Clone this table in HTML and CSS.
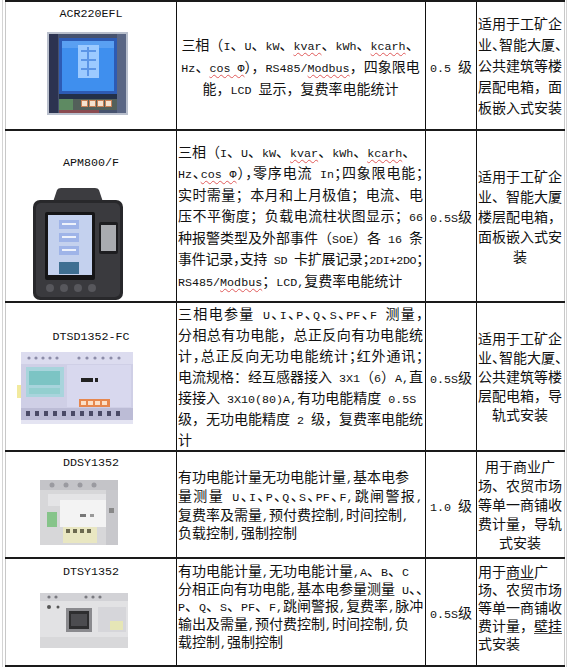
FILE: index.html
```html
<!DOCTYPE html>
<html lang="zh-CN">
<head>
<meta charset="utf-8">
<title>电能表选型表</title>
<link rel="stylesheet" href="styles.css">
</head>
<body>
<div class="frame">
<table class="spec">
<colgroup><col class="c1"><col class="c2"><col class="c3"><col class="c4"></colgroup>
<tbody>
<tr class="r1">
<td class="model">
<div class="name">ACR220EFL</div>
<svg class="dev m1" width="81" height="83" viewBox="0 0 81 83" aria-hidden="true">
<rect width="81" height="83" fill="#b9bfcc"/>
<rect x="2" y="2" width="77" height="79" fill="#46526e"/>
<rect x="2" y="2" width="9" height="79" fill="#2c3350"/>
<rect x="70" y="2" width="9" height="79" fill="#5a6684"/>
<rect x="12" y="6" width="58" height="56" fill="#2d5bb4"/>
<rect x="15" y="9" width="52" height="50" fill="#3f8fee"/>
<rect x="15" y="9" width="52" height="7" fill="#5aa0f2"/>
<rect x="31" y="13" width="21" height="33" fill="#9ccaff"/>
<g fill="#5b95e6"><rect x="34" y="18" width="15" height="2"/><rect x="34" y="27" width="15" height="2"/><rect x="34" y="36" width="15" height="2"/><rect x="40" y="15" width="2" height="29"/></g>
<rect x="12" y="62" width="58" height="5" fill="#233049"/>
<rect x="12" y="67" width="58" height="11" fill="#53605a"/>
<rect x="12" y="67" width="14" height="11" fill="#5e8a62"/>
<g fill="#f6e2cf" stroke="#c88056" stroke-width="1"><rect x="34.5" y="68.5" width="6" height="6"/><rect x="42.5" y="68.5" width="6" height="6"/><rect x="50.5" y="68.5" width="6" height="6"/><rect x="58.5" y="68.5" width="6" height="6"/></g>
<rect x="12" y="78" width="40" height="3" fill="#8a4a50"/>
</svg>
</td>
<td class="desc mid center lh22">
<span class="ln">三相（<span class="en">I</span>、<span class="en">U</span>、<span class="en">kW</span>、<span class="en sp">kvar</span>、<span class="en">kWh</span>、<span class="en sp">kcarh</span>、</span>
<span class="ln"><span class="en">Hz</span>、<span class="en sp">cos Φ</span>），<span class="en">RS485/<span class="sp">Modbus</span></span>，四象限电</span>
<span class="ln">能，<span class="en">LCD </span>显示，复费率电能统计</span>
</td>
<td class="grade"><span class="en">0.5 </span>级</td>
<td class="use mid lh21">
<span class="ln j">适用于工矿企</span>
<span class="ln j">业<span class="h">、</span>智能大厦<span class="h">、</span></span>
<span class="ln j">公共建筑等楼</span>
<span class="ln j">层配电箱，面</span>
<span class="ln j">板嵌入式安装</span>
</td>
</tr>

<tr class="r2">
<td class="model">
<div class="name">APM800/F</div>
<svg class="dev m2" width="90" height="112" viewBox="0 0 90 112" aria-hidden="true">
<path d="M24 2 Q25 0 28 0 H62 Q65 0 66 2 L70 14 H20 Z" fill="#3c3c40"/>
<rect x="0" y="12" width="90" height="100" rx="7" fill="#28282b"/>
<rect x="3" y="15" width="84" height="94" rx="5" fill="#3a3a3e"/>
<rect x="12" y="24" width="50" height="68" rx="2" fill="#151517"/>
<rect x="15" y="27" width="44" height="60" fill="#c4d1ee"/>
<g fill="#9fb4e8"><rect x="26" y="32" width="20" height="9"/><rect x="26" y="45" width="20" height="9"/><rect x="26" y="58" width="20" height="9"/></g>
<g fill="#eef2fb"><rect x="29" y="35" width="14" height="2"/><rect x="29" y="48" width="14" height="2"/><rect x="29" y="61" width="14" height="2"/></g>
<rect x="26" y="74" width="20" height="12" fill="#3f6f92"/>
<rect x="66" y="34" width="19" height="32" rx="2" fill="#1d1d20"/>
<rect x="68" y="37" width="15" height="26" fill="#a9abb0"/>
<g fill="#57575c"><circle cx="17" cy="100" r="4"/><circle cx="31" cy="100" r="4"/><circle cx="45" cy="100" r="4"/><circle cx="59" cy="100" r="4"/></g>
</svg>
</td>
<td class="desc mid lh215">
<span class="ln">三相（<span class="en">I</span>、<span class="en">U</span>、<span class="en">kW</span>、<span class="en sp">kvar</span>、<span class="en">kWh</span>、<span class="en sp">kcarh</span>、</span>
<span class="ln j"><span class="en">Hz</span><span class="h">、</span><span class="en sp">cos Φ</span><span class="h">），</span>零序电流<span class="en"> In</span><span class="h">；</span>四象限电能<span class="h">；</span></span>
<span class="ln j">实时需量；本月和上月极值；电流、电</span>
<span class="ln j">压不平衡度；负载电流柱状图显示；<span class="en">66</span></span>
<span class="ln j">种报警类型及外部事件（<span class="en">SOE</span>）各<span class="en"> 16 </span>条</span>
<span class="ln j tight">事件记录<span class="h">，</span>支持<span class="en"> SD </span>卡扩展记录<span class="h">；</span><span class="en">2DI+2DO</span><span class="h">；</span></span>
<span class="ln"><span class="en">RS485/<span class="sp">Modbus</span></span>；<span class="en">LCD,</span>复费率电能统计</span>
</td>
<td class="grade"><span class="en">0.5S</span>级</td>
<td class="use mid lh20">
<span class="ln j">适用于工矿企</span>
<span class="ln j">业、智能大厦</span>
<span class="ln j">楼层配电箱，</span>
<span class="ln j">面板嵌入式安</span>
<span class="ln center">装</span>
</td>
</tr>

<tr class="r3">
<td class="model">
<div class="name">DTSD1352-FC</div>
<svg class="dev m3" width="116" height="72" viewBox="0 0 116 72" aria-hidden="true">
<rect x="0" y="33" width="5" height="13" fill="#f2ea9e"/>
<rect x="4" y="0" width="112" height="72" rx="3" fill="#cfcfe6"/>
<rect x="4" y="0" width="112" height="12" fill="#dcdcef"/>
<g fill="#8c8ca8"><circle cx="12" cy="6" r="1.6"/><circle cx="19" cy="6" r="1.6"/><circle cx="26" cy="6" r="1.6"/><circle cx="33" cy="6" r="1.6"/><circle cx="40" cy="6" r="1.6"/><circle cx="62" cy="6" r="1.6"/><circle cx="70" cy="6" r="1.6"/><circle cx="78" cy="6" r="1.6"/><circle cx="86" cy="6" r="1.6"/><circle cx="94" cy="6" r="1.6"/><circle cx="102" cy="6" r="1.6"/></g>
<rect x="9" y="15" width="38" height="30" fill="#a8d4dc"/>
<rect x="12" y="19" width="31" height="14" fill="#7cc4c4"/>
<rect x="12" y="36" width="31" height="6" fill="#93cfcf"/>
<rect x="50" y="13" width="64" height="42" fill="#d8d8ee"/>
<rect x="64" y="26" width="12" height="4" fill="#222"/>
<rect x="78" y="26" width="3" height="4" fill="#222"/>
<rect x="62" y="47" width="31" height="8" fill="#e6874e"/>
<g fill="#fbe0c8"><rect x="64" y="49" width="5" height="4"/><rect x="71" y="49" width="5" height="4"/><rect x="78" y="49" width="5" height="4"/><rect x="85" y="49" width="5" height="4"/></g>
<rect x="4" y="56" width="112" height="12" fill="#bcbcd6"/>
<g fill="#4a4a66"><rect x="9" y="59" width="4" height="5"/><rect x="18" y="59" width="4" height="5"/><rect x="27" y="59" width="4" height="5"/><rect x="36" y="59" width="4" height="5"/><rect x="45" y="59" width="4" height="5"/><rect x="54" y="59" width="4" height="5"/><rect x="63" y="59" width="4" height="5"/><rect x="72" y="59" width="4" height="5"/><rect x="81" y="59" width="4" height="5"/><rect x="90" y="59" width="4" height="5"/><rect x="99" y="59" width="4" height="5"/></g>
<rect x="4" y="68" width="112" height="4" fill="#e4e4f2"/>
</svg>
</td>
<td class="desc mid lh21">
<span class="ln j">三相电参量<span class="en"> U</span><span class="h">、</span><span class="en">I</span><span class="h">、</span><span class="en">P</span><span class="h">、</span><span class="en">Q</span><span class="h">、</span><span class="en">S</span><span class="h">、</span><span class="en">PF</span><span class="h">、</span><span class="en">F </span>测量<span class="h">，</span></span>
<span class="ln j">分相总有功电能，总正反向有功电能统</span>
<span class="ln j">计<span class="h">，</span>总正反向无功电能统计<span class="h">；</span>红外通讯<span class="h">；</span></span>
<span class="ln j">电流规格：经互感器接入<span class="en"> 3X1</span>（<span class="en">6</span>）<span class="en">A,</span>直</span>
<span class="ln">接接入<span class="en"> 3X10(80)A,</span>有功电能精度<span class="en"> 0.5S</span></span>
<span class="ln">级，无功电能精度<span class="en"> 2 </span>级，复费率电能统</span>
<span class="ln">计</span>
</td>
<td class="grade"><span class="en">0.5S</span>级</td>
<td class="use mid lh19">
<span class="ln j">适用于工矿企</span>
<span class="ln j">业<span class="h">、</span>智能大厦<span class="h">、</span></span>
<span class="ln j">公共建筑等楼</span>
<span class="ln j">层配电箱，导</span>
<span class="ln center">轨式安装</span>
</td>
</tr>

<tr class="r4">
<td class="model">
<div class="name">DDSY1352</div>
<svg class="dev m4" width="78" height="65" viewBox="0 0 78 65" aria-hidden="true">
<rect width="78" height="65" fill="#d7d7d9"/>
<rect width="78" height="10" fill="#c4c4c8"/>
<g fill="#9a9aa0"><circle cx="12" cy="5" r="2.5"/><circle cx="26" cy="5" r="2.5"/><circle cx="40" cy="5" r="2.5"/><circle cx="54" cy="5" r="2.5"/></g>
<rect x="8" y="14" width="58" height="12" fill="#e4e4e6"/>
<rect x="20" y="20" width="46" height="27" fill="#f3f3f3"/>
<rect x="7" y="32" width="10" height="15" fill="#86c48a"/>
<rect x="40" y="34" width="6" height="3" fill="#777"/>
<rect x="50" y="34" width="4" height="3" fill="#999"/>
<rect x="66" y="10" width="12" height="55" fill="#c8c8cc"/>
<rect x="69" y="28" width="5" height="5" fill="#888"/>
<rect x="23" y="47" width="34" height="16" fill="#e9e7c2"/>
<g fill="#6c6a50"><rect x="26" y="49" width="4" height="4"/><rect x="33" y="49" width="4" height="4"/><rect x="40" y="49" width="4" height="4"/><rect x="47" y="49" width="4" height="4"/></g>
</svg>
</td>
<td class="desc mid lh185">
<span class="ln">有功电能计量无功电能计量<span class="en">,</span>基本电参</span>
<span class="ln j">量测量<span class="en"> U</span><span class="h">、</span><span class="en">I</span><span class="h">、</span><span class="en">P</span><span class="h">、</span><span class="en">Q</span><span class="h">、</span><span class="en">S</span><span class="h">、</span><span class="en">PF</span><span class="h">、</span><span class="en">F,</span>跳闸警报<span class="en">,</span></span>
<span class="ln">复费率及需量<span class="en">,</span>预付费控制<span class="en">,</span>时间控制<span class="en">,</span></span>
<span class="ln">负载控制<span class="en">,</span>强制控制</span>
</td>
<td class="grade"><span class="en">1.0 </span>级</td>
<td class="use mid lh19">
<span class="ln center">用于商业广</span>
<span class="ln j">场、农贸市场</span>
<span class="ln j">等单一商铺收</span>
<span class="ln j">费计量，导轨</span>
<span class="ln center">式安装</span>
</td>
</tr>

<tr class="r5">
<td class="model">
<div class="name">DTSY1352</div>
<svg class="dev m5" width="88" height="55" viewBox="0 0 88 55" aria-hidden="true">
<rect width="88" height="55" fill="#e2e2e4"/>
<rect width="88" height="8" fill="#d2d2d6"/>
<g fill="#7a7a80"><circle cx="9" cy="4" r="1.6"/><circle cx="16" cy="4" r="1.6"/><circle cx="46" cy="4" r="1.6"/><circle cx="53" cy="4" r="1.6"/><circle cx="60" cy="4" r="1.6"/></g>
<rect x="26" y="15" width="26" height="24" fill="#8a8a8e"/>
<rect x="29" y="18" width="20" height="18" fill="#2e2e30"/>
<rect x="31" y="21" width="16" height="12" fill="#4c4c50"/>
<rect x="58" y="14" width="28" height="25" fill="#d6d6da"/>
<rect x="70" y="28" width="13" height="9" fill="#e6e6b6"/>
<g fill="#555"><circle cx="9" cy="14" r="2"/><circle cx="18" cy="14" r="1.5"/><circle cx="9" cy="46" r="2"/><circle cx="56" cy="47" r="2"/></g>
<rect y="44" width="88" height="11" fill="#d8d8da"/>
</svg>
</td>
<td class="desc top lh175">
<span class="ln">有功电能计量<span class="en">,</span>无功电能计量<span class="en">,A</span>、<span class="en">B</span>、<span class="en">C</span></span>
<span class="ln j">分相正向有功电能<span class="en">,</span>基本电参量测量<span class="en"> U</span><span class="h">、、</span></span>
<span class="ln j"><span class="en">P</span>、<span class="en">Q</span>、<span class="en">S</span>、<span class="en">PF</span>、<span class="en">F,</span>跳闸警报<span class="en">,</span>复费率<span class="en">,</span>脉冲</span>
<span class="ln">输出及需量<span class="en">,</span>预付费控制<span class="en">,</span>时间控制<span class="en">,</span>负</span>
<span class="ln">载控制<span class="en">,</span>强制控制</span>
</td>
<td class="grade"><span class="en">0.5S</span>级</td>
<td class="use top lh18">
<span class="ln">用于<span class="ul">商业</span>广</span>
<span class="ln j">场、农贸市场</span>
<span class="ln j">等单一商铺收</span>
<span class="ln j">费计量，<span class="ul">壁挂</span></span>
<span class="ln">式安装</span>
</td>
</tr>
</tbody>
</table>
</div>
</body>
</html>
```

FILE: styles.css
```css
html, body {
  margin: 0;
  padding: 0;
  background: #ffffff;
}

body {
  font-family: "Noto Sans CJK SC", "Liberation Serif", sans-serif;
  color: #111111;
  font-size: 14px;
}

.frame {
  margin-left: 2px;
  width: 559px;
  padding: 0 2px;
  border-left: 1px solid #d4d4d4;
  border-right: 1px solid #d4d4d4;
}

.spec {
  border-collapse: collapse;
  table-layout: fixed;
  width: 559px;
}

.c1 { width: 171px; }
.c2 { width: 249px; }
.c3 { width: 51px; }
.c4 { width: 88px; }

.spec td {
  border-left: 1px solid #111111;
  border-right: 1px solid #111111;
  border-top: 2px solid #1a1a1a;
  border-bottom: 2px solid #1a1a1a;
  padding: 0;
  vertical-align: middle;
  overflow: hidden;
}

.spec td.model {
  border-left: 1px solid #c8c8c8;
  vertical-align: top;
}

.spec td.use {
  border-right: 1px solid #c8c8c8;
  padding: 0 2px 0 1px;
}

.spec td.desc {
  padding: 0 2px 0 1px;
}

.spec td.top {
  vertical-align: top;
  padding-top: 3px;
}

.r1 { height: 129px; }
.r2 { height: 172px; }
.r3 { height: 149px; }
.r4 { height: 107px; }
.r5 { height: 108px; }

.en {
  font-family: "Liberation Mono", monospace;
  font-size: 11.7px;
}

.ln .en,
.grade .en {
  line-height: 1;
}

.name {
  font-family: "Liberation Mono", monospace;
  font-size: 11.7px;
  line-height: 20px;
  text-align: center;
}

.dev { display: block; }

.r1 .model { padding-top: 2px; }
.r2 .model { padding-top: 22px; }
.r3 .model { padding-top: 24px; }
.r4 .model { padding-top: 1px; }
.r5 .model { padding-top: 3px; }

.m1 { margin: 8px 0 0 41px; }
.m2 { margin: 15px 0 0 27px; }
.m3 { margin: 5px 0 0 11px; }
.m4 { margin: 7px 0 0 34px; }
.m5 { margin: 11px 0 0 34px; }

.ln {
  display: block;
  white-space: nowrap;
}

.center { text-align: center; }

.j {
  text-align: justify;
  text-align-last: justify;
}

.h { font-feature-settings: "halt"; }

.tight { letter-spacing: -0.3px; }

.lh22 { line-height: 22px; }
.lh215 { line-height: 21.5px; }
.lh21 { line-height: 21px; }
.lh20 { line-height: 20px; }
.lh19 { line-height: 19px; }
.lh185 { line-height: 18.5px; }
.lh18 { line-height: 18px; }
.lh175 { line-height: 17.5px; }

.grade {
  text-align: center;
  white-space: nowrap;
}

.sp {
  text-decoration: underline wavy #e05a5a;
  text-decoration-thickness: 1px;
  text-underline-offset: 2px;
}

.ul {
  text-decoration: underline;
  text-decoration-color: #555555;
  text-underline-offset: 2px;
}
```
